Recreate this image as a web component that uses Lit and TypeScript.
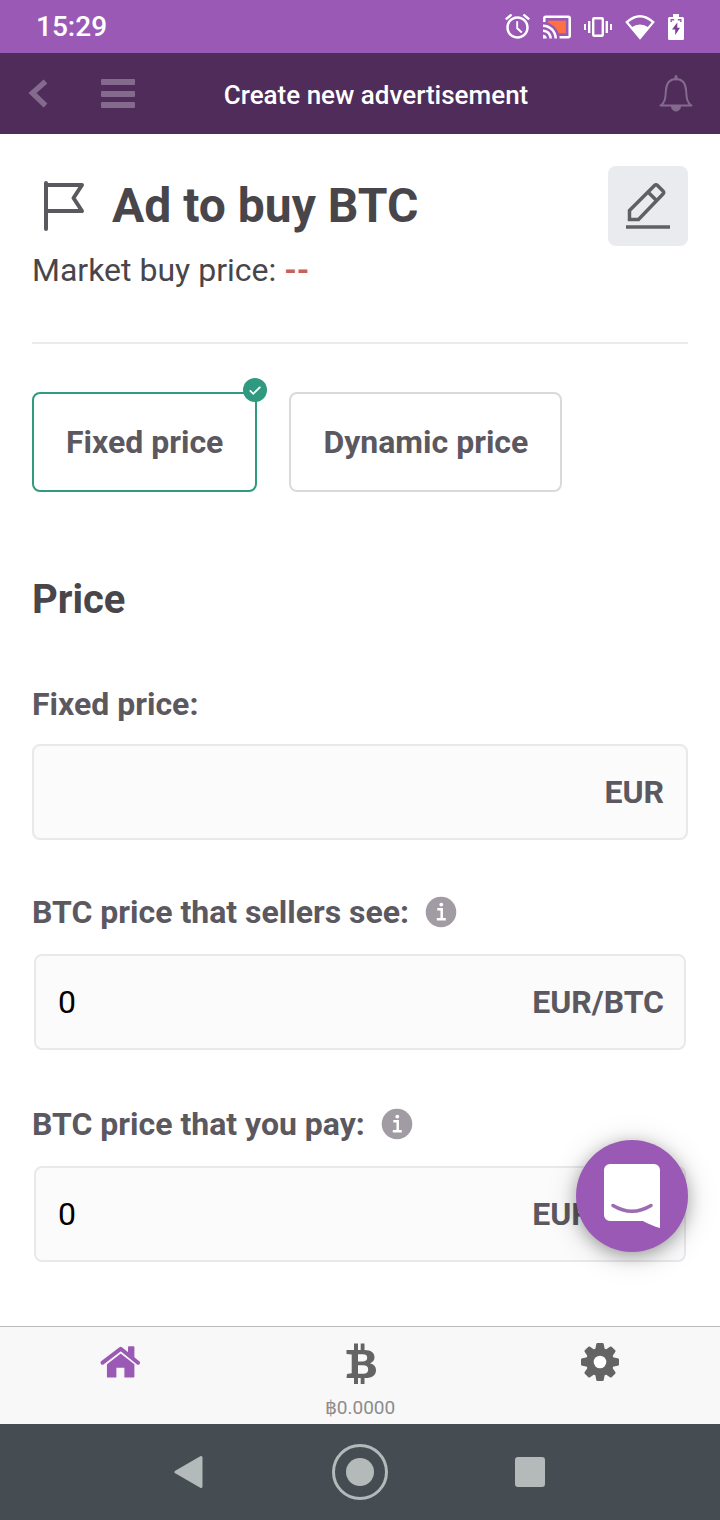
import { LitElement, html, css, svg } from "lit";
import { customElement, property, state } from "lit/decorators.js";

const gearTeeth = [0, 45, 90, 135, 180, 225, 270, 315];

const infoIcon = html`
  <svg width="32" height="32" viewBox="0 0 32 32" aria-hidden="true">
    <circle cx="16" cy="16" r="15.3" fill="#a19ba4" />
    <circle cx="16.3" cy="8.6" r="1.9" fill="#fff" />
    <path d="M12.3 13.2h4.4v9.6M11.8 23.2h9" fill="none" stroke="#fff" stroke-width="2.5" />
  </svg>
`;

@customElement("price-field")
export class PriceField extends LitElement {
  @property() label = "";
  @property() unit = "";
  @property() value = "";
  @property({ type: Boolean }) computed = false;

  static styles = css`
    :host {
      display: flex;
      flex-direction: column;
      gap: 20px;
    }
    .head {
      display: flex;
      align-items: center;
      gap: 16px;
      height: 40px;
      font-size: 32px;
      font-weight: 700;
      color: #5c5860;
    }
    .info {
      display: flex;
      padding: 0;
      border: 0;
      background: none;
    }
    .box {
      display: flex;
      align-items: center;
      box-sizing: border-box;
      height: 96px;
      padding: 0 22px;
      border: 2px solid #e9e9ed;
      border-radius: 8px;
      background: #fbfbfb;
    }
    .box.computed {
      margin: 2px;
      padding-right: 20px;
    }
    .input {
      flex: 1;
      min-width: 0;
      padding: 0;
      border: 0;
      outline: 0;
      background: none;
      font: 400 32px/40px Roboto, sans-serif;
      color: #000;
    }
    .unit {
      font-size: 32px;
      font-weight: 700;
      color: #5c5860;
    }
  `;

  render() {
    return html`
      <div class="head">
        <label for="amount">${this.label}</label>
        ${this.computed
          ? html`<button class="info" type="button" aria-label="More information">${infoIcon}</button>`
          : null}
      </div>
      <div class="box ${this.computed ? "computed" : ""}">
        <input class="input" id="amount" inputmode="decimal" .value=${this.value} ?readonly=${this.computed} />
        <span class="unit">${this.unit}</span>
      </div>
    `;
  }
}

@customElement("app-root")
export class AppRoot extends LitElement {
  @state() private mode = "Fixed price";

  static styles = css`
    :host {
      display: flex;
      flex-direction: column;
      min-height: 100vh;
      background: #fff;
      font-family: Roboto, sans-serif;
      color: #48464a;
    }
    button {
      padding: 0;
      border: 0;
      background: none;
      font-family: inherit;
      color: inherit;
      cursor: pointer;
    }
    svg {
      display: block;
    }
    .status {
      display: flex;
      align-items: center;
      justify-content: space-between;
      height: 53px;
      padding: 0 36px;
      background: #9b59b6;
      color: #fff;
      font-size: 28px;
      font-weight: 500;
    }
    .status-icons {
      display: flex;
      align-items: center;
      gap: 13px;
    }
    .header {
      display: grid;
      grid-template-columns: 76px 84px 1fr 128px;
      align-items: center;
      height: 81px;
      background: #4f2c5a;
    }
    .header-button {
      display: flex;
      justify-content: center;
    }
    .header-button.bell {
      justify-content: flex-end;
      padding-right: 26px;
    }
    .header-title {
      margin: 0;
      padding-top: 3px;
      font-size: 26px;
      font-weight: 500;
      text-align: center;
      color: #fff;
    }
    .body {
      position: relative;
      flex: 1;
      padding: 32px 32px 62px;
    }
    .title-row {
      display: flex;
      align-items: center;
      gap: 16px;
    }
    .title {
      flex: 1;
      margin: 0;
      font-size: 48px;
      line-height: 56px;
      font-weight: 700;
    }
    .edit {
      border-radius: 8px;
      background: #eaebef;
    }
    .market {
      margin: 0 0 48px;
      font-size: 32px;
      line-height: 48px;
    }
    .market-value {
      font-weight: 700;
      color: #c9605c;
    }
    .rule {
      height: 2px;
      margin: 0 0 48px;
      border: 0;
      background: #ebebeb;
    }
    .modes {
      display: flex;
      gap: 32px;
      margin-bottom: 84px;
    }
    .mode {
      position: relative;
      height: 100px;
      padding: 0 32px;
      border: 2px solid #dadada;
      border-radius: 8px;
      font-size: 32px;
      font-weight: 700;
      color: #5c5860;
    }
    .mode.selected {
      border-color: #2f9a7f;
    }
    .tick {
      position: absolute;
      top: -16px;
      right: -12px;
    }
    .section {
      margin: 0 0 60px;
      font-size: 40px;
      line-height: 48px;
      font-weight: 700;
    }
    .fields {
      display: flex;
      flex-direction: column;
      gap: 52px;
    }
    .chat {
      position: absolute;
      right: 32px;
      bottom: 74px;
      border-radius: 50%;
      background: #9b59b6;
      box-shadow: 0 4px 32px rgba(0, 0, 0, 0.16), 0 4px 16px rgba(0, 0, 0, 0.28);
    }
    .tabs {
      display: grid;
      grid-template-columns: repeat(3, 1fr);
      border-top: 1px solid #b9b9b9;
      background: #f8f8f8;
    }
    .tab {
      display: flex;
      flex-direction: column;
      align-items: center;
      height: 97px;
      padding-top: 16px;
      text-decoration: none;
      color: #646464;
    }
    .tab.current {
      color: #9b59b6;
    }
    .tab,
    .nav-bar,
    .header {
      box-sizing: border-box;
    }
    .tab-icon {
      display: flex;
      align-items: center;
      height: 40px;
      margin-bottom: 13px;
    }
    .tab-label {
      font-size: 19px;
      line-height: 24px;
      color: #8c8c8c;
    }
    .nav-bar {
      display: flex;
      justify-content: center;
      height: 96px;
      background: #454d53;
    }
    .nav-button {
      display: flex;
      align-items: center;
      justify-content: center;
      width: 170px;
    }
  `;

  private renderStatus() {
    return html`
      <div class="status">
        <span>15:29</span>
        <div class="status-icons">
          <svg width="25" height="26" viewBox="2 2.2 20 20.8" fill="#fff">
            <path d="M22 5.72l-4.6-3.86-1.29 1.53 4.6 3.86L22 5.72zM7.88 3.39L6.6 1.86 2 5.71l1.29 1.53 4.59-3.85zM12.5 8H11v6l3.9 3.6 1.1-1.2-3.5-3.2V8zM12 4c-4.97 0-9 4.03-9 9s4.02 9 9 9c4.97 0 9-4.03 9-9s-4.03-9-9-9zm0 16c-3.87 0-7-3.13-7-7s3.13-7 7-7 7 3.13 7 7-3.13 7-7 7z" />
          </svg>
          <svg width="28" height="24" viewBox="1 3 22 18" fill="#fff">
            <path d="M5 7v1.63c3.96 1.28 7.09 4.41 8.37 8.37H19V7z" fill="#ff7043" />
            <path d="M21 3H3c-1.1 0-2 .9-2 2v3h2V5h18v14h-7v2h7c1.1 0 2-.9 2-2V5c0-1.1-.9-2-2-2zM1 18v3h3c0-1.66-1.34-3-3-3zm0-4v2c2.76 0 5 2.24 5 5h2c0-3.87-3.13-7-7-7zm0-4v2c4.97 0 9 4.03 9 9h2c0-6.08-4.93-11-11-11z" />
          </svg>
          <svg width="28" height="20" viewBox="0 0 28 20" fill="#fff">
            <path d="M0 7h2v6H0zM4 4h2.4v12H4zM21.6 4H24v12h-2.4zM26 7h2v6h-2z" />
            <rect x="9.2" y="1.2" width="9.6" height="17.6" rx="1" fill="none" stroke="#fff" stroke-width="2.4" />
          </svg>
          <svg width="30" height="26" viewBox="0 0 30 26" fill="#fff">
            <path d="M1.8 8.2Q15-3.6 28.2 8.2L15 24z" fill="none" stroke="#fff" stroke-width="2.3" />
            <path d="M6.2 13.4Q15 7.8 23.8 13.4L15 24.5z" />
          </svg>
          <svg width="16" height="26" viewBox="0 0 16 26">
            <path d="M5 0h6v3h3.4c.9 0 1.6.7 1.6 1.6v19.8c0 .9-.7 1.6-1.6 1.6H1.6C.7 26 0 25.3 0 24.4V4.6C0 3.7.7 3 1.6 3H5z" fill="#fff" />
            <path d="M9.3 8.5L4 15.5h3.2v5.5L12 13.8H9.3z" fill="#7b3f95" />
            <path d="M3.2 8V5.8h3M12.8 8V5.8h-3" fill="none" stroke="#9b59b6" stroke-width="1.4" />
          </svg>
        </div>
      </div>
    `;
  }

  private renderHeader() {
    return html`
      <header class="header">
        <button class="header-button" type="button" aria-label="Back">
          <svg width="20" height="32" viewBox="0 0 20 32">
            <path d="M17.5 3.5L4.5 15 17.5 27.5" fill="none" stroke="#846b8d" stroke-width="5.5" />
          </svg>
        </button>
        <button class="header-button" type="button" aria-label="Menu">
          <svg width="34" height="30" viewBox="0 0 34 30" fill="#846b8d">
            <rect y="0" width="34" height="6" rx="1" />
            <rect y="12" width="34" height="6" rx="1" />
            <rect y="23" width="34" height="6" rx="1" />
          </svg>
        </button>
        <h1 class="header-title">Create new advertisement</h1>
        <button class="header-button bell" type="button" aria-label="Notifications">
          <svg width="36" height="38" viewBox="0 0 36 38" fill="none" stroke="#846b8d">
            <path d="M2.5 30.5C7 27.5 7.5 23.5 7.8 16.5 8.2 8.5 12 4 18 4s9.8 4.5 10.2 12.5c.3 7 .8 11 5.3 14z" stroke-width="2" stroke-linejoin="round" />
            <path d="M13.500 31.5a4.500 4.500 0 0 0 9 0z" fill="#846b8d" stroke-width="1" />
            <path d="M18 4V1.5" stroke-width="3" stroke-linecap="round" />
          </svg>
        </button>
      </header>
    `;
  }

  private renderMode(name: string) {
    const selected = this.mode === name;
    return html`
      <button
        class="mode ${selected ? "selected" : ""}"
        type="button"
        aria-pressed=${selected ? "true" : "false"}
        @click=${() => (this.mode = name)}
      >
        ${name}
        ${selected
          ? html`<svg class="tick" width="24" height="24" viewBox="0 0 24 24">
              <circle cx="12" cy="12" r="12" fill="#2f9a7f" />
              <path d="M6.8 12.3l3.5 3.5 7-7" fill="none" stroke="#fff" stroke-width="1.8" />
            </svg>`
          : null}
      </button>
    `;
  }

  private renderTabs() {
    return html`
      <nav class="tabs">
        <a class="tab current" href="#home" aria-label="Home">
          <span class="tab-icon">
            <svg width="40" height="34" viewBox="0 0 40 34" fill="currentColor">
              <path d="M28 1.5c0-.7.4-1.2 1.2-1.2h4c.8 0 1.2.5 1.2 1.2V12L28 7z" />
              <path d="M2.6 16.7L20.700 2.8 38 16.7" fill="none" stroke="currentColor" stroke-width="4" stroke-linejoin="round" stroke-linecap="round" />
              <path d="M6.3 18L20.7 6.8 35 18v12.500c0 1-.6 1.6-1.5 1.6h-9.7V22.3H17v9.800H7.8c-.9 0-1.5-.6-1.5-1.6z" stroke="#f8f8f8" stroke-width="1.2" />
            </svg>
          </span>
        </a>
        <a class="tab" href="#wallet">
          <span class="tab-icon">
            <svg width="32" height="42" viewBox="-1 -1 32 42" fill="currentColor">
              <path d="M9 .5h4V8H9zM15.7.5h3.8V8h-3.8zM9 34h4v7H9zM15.7 34h3.8v7h-3.8z" />
              <path fill-rule="evenodd" d="M1.500 7H19.500C26 7 29.500 9.800 29.500 14.200c0 3-1.600 5-4.500 6 4 1 6 3.400 6 7C31 32.300 27 35 20.500 35H1.500l.5-4 4.700-.7V11.500L1.500 11zM13 11.300v7.200h4.500c3 0 4.700-1.200 4.700-3.700 0-2.400-1.500-3.500-4.500-3.500zM13 22.300v8.500h5.200c3.300 0 5-1.400 5-4.200 0-3-1.700-4.300-5.200-4.300z" />
            </svg>
          </span>
          <span class="tab-label">฿0.0000</span>
        </a>
        <a class="tab" href="#settings" aria-label="Settings">
          <span class="tab-icon">
            <svg width="38" height="40" viewBox="0 0 38 40" fill="currentColor">
              ${gearTeeth.map(
                (angle) => svg`<path transform="rotate(${angle} 19 19)" d="M14 8l1.2-6.8Q15.4 0 16.5 0h5Q22.6 0 22.8 1.2L24 8z" />`
              )}
              <circle cx="19" cy="19" r="14" />
              <circle cx="19" cy="19" r="6.3" fill="#fff" />
            </svg>
          </span>
        </a>
      </nav>
    `;
  }

  private renderNavBar() {
    return html`
      <div class="nav-bar">
        <button class="nav-button" type="button" aria-label="Back">
          <svg width="32" height="34" viewBox="0 0 32 34">
            <path d="M27 2.5v29L2 17z" fill="#b4b9ba" stroke="#b4b9ba" stroke-width="3" stroke-linejoin="round" />
          </svg>
        </button>
        <button class="nav-button" type="button" aria-label="Home">
          <svg width="56" height="56" viewBox="0 0 56 56">
            <circle cx="28" cy="28" r="26.5" fill="none" stroke="#b4b9ba" stroke-width="3" />
            <circle cx="28" cy="28" r="14" fill="#b4b9ba" />
          </svg>
        </button>
        <button class="nav-button" type="button" aria-label="Recent apps">
          <svg width="30" height="30" viewBox="0 0 30 30">
            <rect width="30" height="30" rx="3" fill="#b4b9ba" />
          </svg>
        </button>
      </div>
    `;
  }

  render() {
    return html`
      ${this.renderStatus()} ${this.renderHeader()}
      <main class="body">
        <div class="title-row">
          <svg width="64" height="64" viewBox="0 0 64 64" fill="none" stroke="#5c5860" stroke-width="4" stroke-linecap="round" stroke-linejoin="round">
            <path d="M14 9v46M14 11h36L41.5 24 50 37H14" />
          </svg>
          <h2 class="title">Ad to buy BTC</h2>
          <button class="edit" type="button" aria-label="Edit">
            <svg width="80" height="80" viewBox="0 0 80 80" fill="none" stroke="#5f5f64" stroke-width="3.5">
              <path d="M21.5 53.5V44.5L46.5 19.5Q48 18 49.5 19.5L55 25Q56.5 26.5 55 28L30.5 53.5zM40 26l9 9" />
              <path d="M18 61h44" />
            </svg>
          </button>
        </div>
        <p class="market">Market buy price: <span class="market-value">--</span></p>
        <hr class="rule" />
        <div class="modes">${this.renderMode("Fixed price")} ${this.renderMode("Dynamic price")}</div>
        <h3 class="section">Price</h3>
        <div class="fields">
          <price-field label="Fixed price:" unit="EUR"></price-field>
          <price-field label="BTC price that sellers see:" unit="EUR/BTC" value="0" computed></price-field>
          <price-field label="BTC price that you pay:" unit="EUR/BTC" value="0" computed></price-field>
        </div>
        <button class="chat" type="button" aria-label="Open chat">
          <svg width="112" height="112" viewBox="0 0 112 112">
            <path d="M34 24h44a6 6 0 0 1 6 6v58c-6-1.500-11-4-17-7H34a6 6 0 0 1-6-6V30a6 6 0 0 1 6-6z" fill="#fff" />
            <path d="M37 65.5Q56 77 75 65.5" fill="none" stroke="#9b6bb3" stroke-width="3.5" stroke-linecap="round" />
          </svg>
        </button>
      </main>
      ${this.renderTabs()} ${this.renderNavBar()}
    `;
  }
}
